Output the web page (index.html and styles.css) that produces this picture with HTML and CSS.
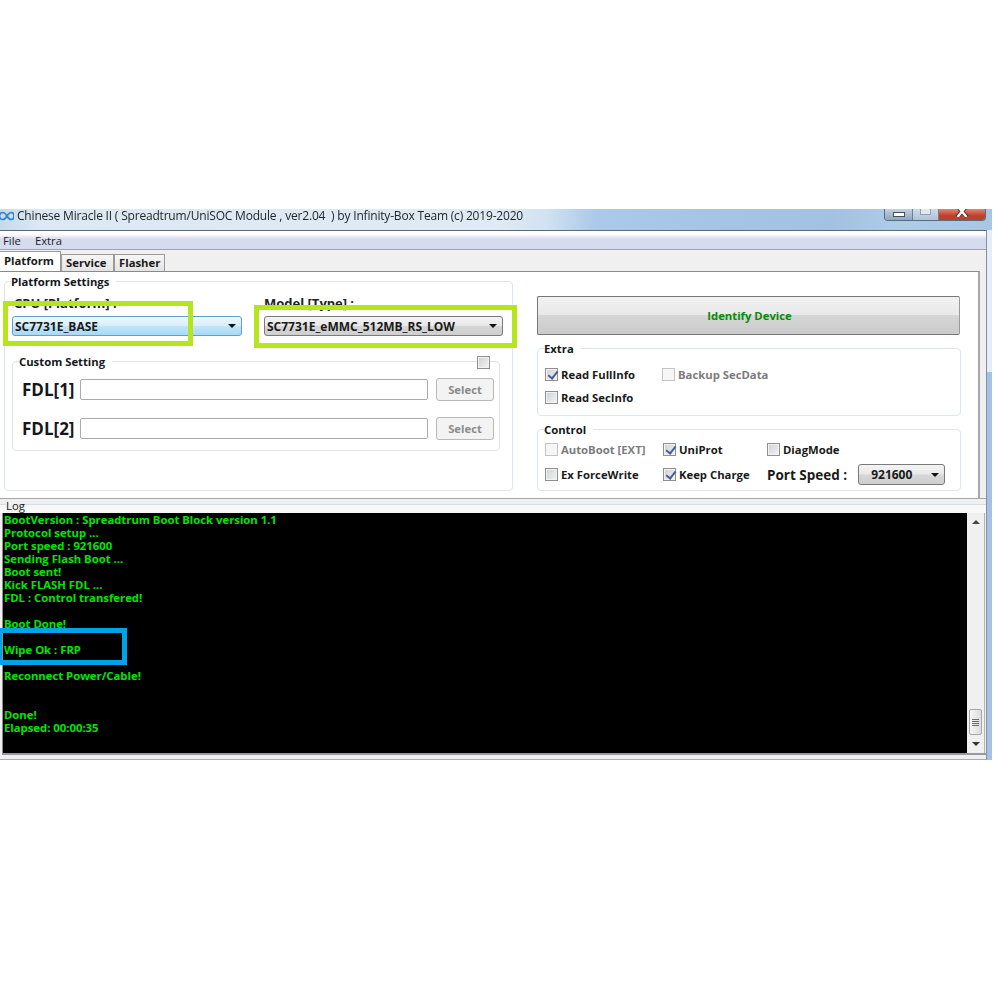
FILE: index.html
```html
<!DOCTYPE html>
<html lang="en">
<head>
<meta charset="utf-8">
<title>Chinese Miracle II</title>
<link rel="stylesheet" href="styles.css">
</head>
<body>
<div class="window">
  <header class="titlebar">
    <svg class="logo" width="14" height="10" viewBox="0 0 14 10"><path d="M7 5C5.500 2.500 4 1.500 2.800 1.500 1 1.500-.5 3-.5 5s1.500 3.500 3.300 3.500C4 8.500 5.500 7.500 7 5c1.500-2.500 3-3.500 4.200-3.500C13 1.500 14 3 14 5s-1 3.500-2.800 3.500C10 8.500 8.500 7.500 7 5z" fill="none" stroke="#2f86c8" stroke-width="1.700"/></svg>
    <span class="title">Chinese Miracle II ( Spreadtrum/UniSOC Module , ver2.04 &nbsp;) by Infinity-Box Team (c) 2019-2020</span>
    <div class="caption">
      <span class="cap cap-min"><i></i></span>
      <span class="cap cap-max"><i></i></span>
      <span class="cap cap-close"><svg width="14" height="8" viewBox="0 0 14 8"><path d="M2-3l10 11M12-3L2 8" stroke="#5a2a20" stroke-width="4" fill="none"/><path d="M2.500-3l9 11M11.500-3l-9 11" stroke="#fff" stroke-width="2.400" fill="none"/></svg></span>
    </div>
  </header>
  <div class="frame-row">
    <div class="client">
      <nav class="menu"><span>File</span><span>Extra</span></nav>
      <div class="tabs">
        <span class="tab active">Platform</span>
        <span class="tab t-service">Service</span>
        <span class="tab t-flasher">Flasher</span>
      </div>
      <div class="page-row">
        <main class="page">
          <fieldset class="group platform">
            <legend>Platform Settings</legend>
            <div class="selectors">
              <div class="sel-col">
                <label class="sel-label lab-cpu">CPU [Platform] :</label>
                <div class="combo blue w-cpu"><span>SC7731E_BASE</span><b class="arrow"></b></div>
              </div>
              <div class="sel-col">
                <label class="sel-label">Model [Type] :</label>
                <div class="combo w-model"><span>SC7731E_eMMC_512MB_RS_LOW</span><b class="arrow"></b></div>
              </div>
            </div>
            <fieldset class="group custom">
              <legend>Custom Setting</legend>
              <span class="check custom-check"></span>
              <div class="fdl"><span class="fdl-name">FDL[1]</span><span class="input"></span><span class="btn">Select</span></div>
              <div class="fdl"><span class="fdl-name">FDL[2]</span><span class="input"></span><span class="btn">Select</span></div>
            </fieldset>
          </fieldset>
          <div class="side">
            <button class="identify">Identify Device</button>
            <fieldset class="group extra">
              <legend>Extra</legend>
              <div class="opts opts-extra">
                <div class="opt"><span class="check on"></span>Read FullInfo</div>
                <div class="opt off"><span class="check dim"></span>Backup SecData</div>
                <div class="opt"><span class="check"></span>Read SecInfo</div>
              </div>
            </fieldset>
            <fieldset class="group control">
              <legend>Control</legend>
              <div class="opts opts-control">
                <div class="opt off"><span class="check dim"></span>AutoBoot [EXT]</div>
                <div class="opt"><span class="check on"></span>UniProt</div>
                <div class="opt"><span class="check"></span>DiagMode</div>
                <div class="opt"><span class="check"></span>Ex ForceWrite</div>
                <div class="opt"><span class="check on"></span>Keep Charge</div>
                <div class="port"><span class="port-name">Port Speed :</span><div class="combo w-port"><span>921600</span><b class="arrow"></b></div></div>
              </div>
            </fieldset>
          </div>
        </main>
        <div class="page-gutter"></div>
      </div>
      <section class="logarea">
        <div class="log-head"><span>Log</span></div>
        <div class="log-body">
          <pre class="console">BootVersion : Spreadtrum Boot Block version 1.1
Protocol setup ...
Port speed : 921600
Sending Flash Boot ...
Boot sent!
Kick FLASH FDL ...
FDL : Control transfered!

Boot Done!

Wipe Ok : FRP

Reconnect Power/Cable!


Done!
Elapsed: 00:00:35</pre>
          <div class="scrollbar">
            <span class="sb-arrow up"></span>
            <span class="sb-track"></span>
            <span class="sb-thumb"><i></i><i></i><i></i><i></i></span>
            <span class="sb-arrow down"></span>
          </div>
        </div>
      </section>
    </div>
    <div class="frame-right"></div>
  </div>
  <div class="mark green m-cpu"></div>
  <div class="mark green m-model"></div>
  <div class="mark blue-mark m-wipe"></div>
</div>
</body>
</html>
```

FILE: styles.css
```css
* { box-sizing: border-box; }
html, body { margin: 0; padding: 0; background: #fff; }
body {
  padding-top: 209px;
  height: 993px;
  overflow: hidden;
  font-family: "Open Sans", "Liberation Sans", sans-serif;
  font-size: 11.3px;
  font-weight: 700;
  color: #1a1a1a;
}
.window {
  position: relative;
  width: 992px;
  height: 551px;
  display: flex;
  flex-direction: column;
  filter: blur(.3px);
}

/* title bar */
.titlebar {
  height: 21px;
  flex: none;
  display: flex;
  align-items: flex-start;
  background: linear-gradient(90deg, #c6d9ec 0, #dce8f3 4%, #e0eaf4 50%, #d2e2f2 55%, #abc9e8 60%, #a6c4e4 72%, #a3c1e0 84%, #aecbe8 90%, #a9c6e4 100%);
  position: relative;
}
.logo { margin-top: 2px; flex: none; }
.title {
  margin-left: 3px;
  font-size: 12px;
  line-height: 14px;
  font-weight: 400;
  color: #20262c;
  white-space: nowrap;
  letter-spacing: -.19px;
}
.caption {
  position: absolute;
  top: 0;
  left: 884px;
  width: 102px;
  height: 12px;
  display: flex;
  border: 1px solid #5c6c80;
  border-top: 0;
  border-radius: 0 0 4px 4px;
  overflow: hidden;
}
.cap { display: flex; justify-content: center; align-items: flex-start; }
.cap-min { width: 28px; background: linear-gradient(#c4d2e2, #8ea6c0); border-right: 1px solid #6d7f95; }
.cap-min i { width: 12px; height: 5px; margin-top: 3px; background: #fff; border: 1px solid #46505c; }
.cap-max { width: 26px; background: linear-gradient(#cfdbe8, #adc3da); border-right: 1px solid #6d7f95; }
.cap-max i { width: 11px; height: 6px; border: 1px solid #8ea0b4; border-top: 0; background: #dfe8f1; }
.cap-close { flex: 1; background: linear-gradient(#d78a78, #c0402c 60%, #b8412e); }

.frame-row { flex: 1; display: flex; min-height: 0; }
.client {
  width: 987px;
  display: flex;
  flex-direction: column;
  background: #f0f0f0;
  border-top: 1px solid #5a6878;
  border-right: 1px solid #8b8e9a;
  border-bottom: 1px solid #a9acb4;
}
.frame-right {
  flex: 1;
  background: linear-gradient(#e4eef9 0, #e4eef9 142px, #a3c3e6 142px, #a3c3e6 100%);
}

/* menu */
.menu {
  height: 19px;
  flex: none;
  display: flex;
  gap: 14px;
  align-items: center;
  padding-left: 3px;
  font-weight: 400;
  font-size: 11.3px;
  color: #222;
  background: linear-gradient(#fff 0, #fff 3px, #d6dcf0 8px, #d6dcf0 100%);
  border-bottom: 1px solid #a0a2ae;
}

/* tabs */
.tabs {
  height: 21px;
  flex: none;
  display: flex;
  align-items: flex-end;
  padding-top: 1px;
}
.tab {
  height: 17px;
  padding: 0 4px 1px;
  display: flex;
  align-items: center;
  background: linear-gradient(#f6f6f6, #e4e4e4);
  border: 1px solid #9a9a9a;
  border-bottom: 0;
  white-space: nowrap;
}
.tab.active {
  width: 61px;
  height: 20px;
  background: #fff;
  border-left: 0;
  border-color: #9a9a9a;
  padding: 0 0 2px 4px;
}
.t-service { width: 53px; }
.t-flasher { width: 51px; }

/* page */
.page-row { height: 227px; flex: none; display: flex; }
.page {
  width: 980px;
  background: #fff;
  border-top: 1px solid #8a8a8a;
  border-right: 2px solid #a8a8ac;
  padding: 3px 0 0 4px;
  display: flex;
  gap: 24px;
  align-items: flex-start;
}
.page-gutter { flex: 1; }

.group {
  margin: 0;
  min-width: 0;
  border: 1px solid #dde6ee;
  border-radius: 4px;
  background: #fff;
}
.group legend {
  padding: 0 7px 0 0;
  margin-left: -1px;
  line-height: 13px;
  color: #14181c;
}
.platform {
  flex: none;
  width: 509px;
  height: 216px;
  padding: 8px 8px 0 7px;
}
.selectors { display: flex; gap: 22px; }
.sel-col { display: flex; flex-direction: column; gap: 5px; }
.sel-label { font-size: 13px; line-height: 15px; color: #222; white-space: nowrap; }
.lab-cpu { margin-left: 2px; }
.combo {
  height: 20px;
  display: flex;
  align-items: center;
  justify-content: space-between;
  padding: 0 5px 0 2px;
  border: 1px solid #7a7a7a;
  border-radius: 3px;
  background: linear-gradient(#f4f4f4, #e8e8e8 48%, #d6d6d6 52%, #cfcfcf);
  color: #1a1a1a;
  font-size: 12px;
}
.combo.blue {
  border-color: #5f9fc8;
  background: linear-gradient(#ecf7fd, #d8eefb 48%, #bfe5f9 52%, #a8d8f4);
}
.arrow {
  width: 0; height: 0;
  border: 4px solid transparent;
  border-top: 4px solid #111;
  border-bottom: 0;
}
.w-cpu { width: 230px; }
.w-model { width: 239px; }
.w-port { flex: none; width: 87px; height: 21px; padding: 0 5px 0 12px; }

.group.custom {
  position: relative;
  width: 488px;
  height: 96px;
  margin-top: 19px;
  padding: 9px 5px 0 9px;
}
.group.custom legend { margin-left: -3px; }
.check.custom-check { position: absolute; right: 9px; top: -12px; }
.fdl {
  height: 24px;
  display: flex;
  align-items: center;
  margin-bottom: 15px;
}
.fdl-name { flex: none; width: 58px; font-size: 17px; color: #14181c; white-space: nowrap; }
.input {
  flex: none;
  width: 348px;
  height: 21px;
  border: 1px solid #aaa;
  border-radius: 2px;
  background: #fff;
}
.btn {
  flex: none;
  width: 58px;
  height: 23px;
  margin-left: 8px;
  display: flex;
  align-items: center;
  justify-content: center;
  color: #8c8c8c;
  background: #f3f3f3;
  border: 1px solid #b8b8b8;
  border-radius: 3px;
}

/* side column */
.side {
  flex: none;
  width: 424px;
  padding-top: 21px;
  display: flex;
  flex-direction: column;
}
.identify {
  width: 423px;
  height: 39px;
  padding: 0 0 0 2px;
  font: inherit;
  color: #0a8a0a;
  border: 1px solid #777;
  border-right-color: #999;
  border-radius: 2px;
  background: linear-gradient(#f2f2f2, #e9e9e9 48%, #d6d6d6 50%, #cbcbcb);
}
.extra { height: 74px; margin-top: 7px; padding: 8px 7px 0 7px; }
.control { height: 68px; margin-top: 7px; padding: 1px 7px 0 7px; }

.opts { display: grid; align-items: center; }
.opts-extra { grid-template-columns: 117px 1fr; grid-auto-rows: 23px; }
.opts-control { grid-template-columns: 118px 104px 1fr; grid-auto-rows: 25px; }
.opt { display: flex; align-items: center; gap: 3px; white-space: nowrap; }
.opt.off { color: #7c7c7c; }
.port { display: flex; align-items: center; gap: 11px; }
.port-name { flex: none; font-size: 13.500px; white-space: nowrap; }

.check {
  flex: none;
  display: block;
  position: relative;
  width: 13px;
  height: 13px;
  border: 1px solid #8e8f8f;
  background: linear-gradient(135deg, #cfd0d2, #f4f4f4);
  box-shadow: inset 0 0 0 1px #f2f2f2;
}
.check.dim { border-color: #c4c4c4; background: #f6f6f6; box-shadow: none; }
.check.on::after {
  content: "";
  position: absolute;
  left: 4px;
  top: 0;
  width: 4px;
  height: 8px;
  border: solid #4a5f97;
  border-width: 0 2px 2px 0;
  transform: rotate(38deg);
}

/* log */
.logarea { flex: 1; display: flex; flex-direction: column; min-height: 0; border-top: 1px solid #a6a6a6; }
.log-head {
  height: 14px;
  flex: none;
  padding: 1px 0 0 6px;
  font-weight: 400;
  font-size: 11.3px;
  line-height: 12px;
  background: linear-gradient(#f0f0f0 0, #f0f0f0 5px, #d8dde2 5px, #d8dde2 6px, #f8f8f8 6px);
}
.log-head span { background: #f0f0f0; display: inline-block; height: 12px; }
.log-body {
  flex: none;
  height: 242px;
  margin-left: 2px;
  display: flex;
  border-left: 1px solid #8e8e8e;
  border-bottom: 2px solid #9a9a9e;
}
.console {
  flex: none;
  width: 964px;
  margin: 0;
  padding: 0 0 0 1px;
  background: #000;
  color: #00e600;
  font: inherit;
  line-height: 13px;
  overflow: hidden;
}
.scrollbar {
  flex: none;
  width: 18px;
  display: flex;
  flex-direction: column;
  align-items: center;
  background: #f0f0f0;
  border-right: 1px solid #b4b4b4;
}
.sb-arrow { flex: none; width: 0; height: 0; margin: 7px 0; border: 4px solid transparent; }
.sb-arrow.up { border-top: 0; border-bottom: 4px solid #444; }
.sb-arrow.down { border-bottom: 0; border-top: 4px solid #333; }
.sb-track { flex: 1; }
.sb-thumb {
  flex: none;
  width: 13px;
  height: 26px;
  display: flex;
  flex-direction: column;
  align-items: center;
  justify-content: center;
  gap: 1px;
  border: 1px solid #a8a8a8;
  border-radius: 2px;
  background: linear-gradient(90deg, #f6f6f6, #dcdcdc);
}
.sb-thumb i { width: 7px; height: 1px; background: #6a6a6a; }

/* annotation rectangles */
.mark { position: absolute; pointer-events: none; border-width: 5px; border-style: solid; }
.green { border-color: #b5e61d; }
.blue-mark { border-color: #00a2e8; }
.m-cpu { left: 3px; top: 92px; width: 190px; height: 45px; }
.m-model { left: 254px; top: 96px; width: 263px; height: 43px; }
.m-wipe { left: -3px; top: 419px; width: 130px; height: 37px; }
```
